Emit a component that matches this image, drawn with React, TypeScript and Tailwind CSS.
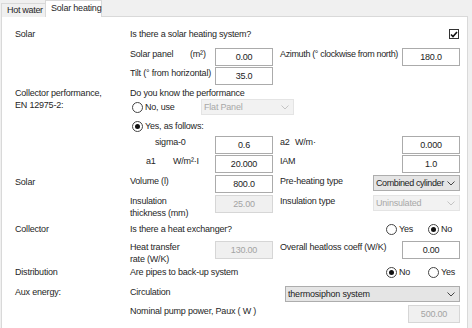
import React from "react";

function Chevron({ color = "#555" }: { color?: string }) {
  return (
    <svg width="8" height="5" viewBox="0 0 8 5" className="shrink-0">
      <path d="M0.5 0.5 L4 4 L7.5 0.5" fill="none" stroke={color} strokeWidth="1" />
    </svg>
  );
}

function Field({ value, w = "w-[58px]", disabled = false }: { value: string; w?: string; disabled?: boolean }) {
  return (
    <div
      className={`${w} h-[18px] shrink-0 border flex items-center justify-center ${
        disabled ? "border-[#d6d6d6] bg-[#f0f0f0] text-[#a3a3a3]" : "border-[#ababab] bg-white text-[#222]"
      }`}
    >
      {value}
    </div>
  );
}

function Select({ value, w, disabled = false, tight = false }: { value: string; w: string; disabled?: boolean; tight?: boolean }) {
  return (
    <div
      className={`${w} h-[16px] shrink-0 border flex items-center justify-between pl-[2px] pr-[4px] ${
        disabled ? "border-[#e4e4e4] bg-[#f2f2f2] text-[#a8a8a8]" : "border-[#adadad] bg-[#e5e5e5] text-[#222]"
      }`}
    >
      <span className={tight ? "tracking-[-0.4px]" : ""}>{value}</span>
      <Chevron color={disabled ? "#c4c4c4" : "#444"} />
    </div>
  );
}

function Radio({ checked = false, label }: { checked?: boolean; label: string }) {
  return (
    <div className="flex items-center gap-[2px]">
      <span className="w-[11px] h-[11px] shrink-0 rounded-full border border-[#444] bg-white flex items-center justify-center">
        {checked && <span className="w-[5px] h-[5px] rounded-full bg-[#111]" />}
      </span>
      <span>{label}</span>
    </div>
  );
}

function Checkbox() {
  return (
    <span className="w-[10px] h-[10px] border border-[#333] bg-white flex items-center justify-center">
      <svg width="8" height="7" viewBox="0 0 8 7">
        <path d="M1 3.5 L3 5.5 L7 1" fill="none" stroke="#111" strokeWidth="1.6" />
      </svg>
    </span>
  );
}

export default function App() {
  return (
    <div className="w-[472px] h-[328px] overflow-hidden whitespace-nowrap bg-[#f0f0f0] text-[9px] leading-[12px] tracking-[-0.2px] text-[#262626] [font-family:'Liberation_Sans',Arial,sans-serif]">
      {/* Tabs */}
      <div className="relative z-10 flex items-end h-[17px] pl-[1px]">
        <div className="w-[44px] h-[14px] border border-r-0 border-b-0 border-[#d9d9d9] bg-[#f0f0f0] pl-[5px] leading-[13px] tracking-[-0.3px]">
          Hot water
        </div>
        <div className="w-[57px] h-[17px] border border-b-0 border-[#d9d9d9] bg-white pl-[5px] leading-[15px]">
          Solar heating
        </div>
      </div>

      {/* Panel */}
      <div className="-mt-[1px] ml-[1px] w-[467px] h-[320px] border border-[#d9d9d9] bg-white pl-[13px] pr-[7px] pt-[10px]">
        {/* Solar */}
        <div className="flex items-center h-[14px]">
          <div className="w-[115px] shrink-0">Solar</div>
          <div className="flex-1 flex items-center justify-between">
            <span>Is there a solar heating system?</span>
            <span className="mr-[1px]"><Checkbox /></span>
          </div>
        </div>
        <div className="flex items-start mt-[7px] h-[18px]">
          <div className="w-[115px] shrink-0" />
          <div className="w-[85px] shrink-0 flex">
            <span className="w-[60px]">Solar panel</span>
            <span>(m²)</span>
          </div>
          <Field value="0.00" />
          <div className="flex-1 min-w-0 pl-[7px] tracking-[-0.35px]">Azimuth (° clockwise from north)</div>
          <Field value="180.0" />
        </div>
        <div className="flex items-start mt-[1px] h-[18px]">
          <div className="w-[115px] shrink-0" />
          <div className="w-[85px] shrink-0">Tilt (° from horizontal)</div>
          <Field value="35.0" />
        </div>

        {/* Collector performance */}
        <div className="flex items-start mt-[2px] h-[12px]">
          <div className="w-[115px] shrink-0">
            Collector performance,
            <br />
            EN 12975-2:
          </div>
          <div>Do you know the performance</div>
        </div>
        <div className="flex items-center h-[16px]">
          <div className="w-[115px] shrink-0" />
          <div className="w-[71px] shrink-0 pl-[2px]">
            <Radio label="No, use" />
          </div>
          <Select value="Flat Panel" w="w-[93px]" disabled />
        </div>
        <div className="flex items-center mt-[4px] h-[14px]">
          <div className="w-[115px] shrink-0" />
          <div className="pl-[2px]">
            <Radio checked label="Yes, as follows:" />
          </div>
        </div>
        <div className="flex items-start mt-[3px] h-[18px]">
          <div className="w-[115px] shrink-0" />
          <div className="w-[85px] shrink-0 pl-[25px]">sigma-0</div>
          <Field value="0.6" />
          <div className="flex-1 min-w-0 pl-[7px] flex">
            <span className="w-[15px]">a2</span>
            <span>W/m·</span>
          </div>
          <Field value="0.000" />
        </div>
        <div className="flex items-start mt-[1px] h-[18px]">
          <div className="w-[115px] shrink-0" />
          <div className="w-[85px] shrink-0 pl-[16px] flex">
            <span className="w-[27px]">a1</span>
            <span>W/m²·I</span>
          </div>
          <Field value="20.000" />
          <div className="flex-1 min-w-0 pl-[7px]">IAM</div>
          <Field value="1.0" />
        </div>

        {/* Solar storage */}
        <div className="flex items-start mt-[2px] h-[18px]">
          <div className="w-[115px] shrink-0 pt-[1px]">Solar</div>
          <div className="w-[85px] shrink-0">Volume (l)</div>
          <Field value="800.0" />
          <div className="flex-1 min-w-0 pl-[7px]">Pre-heating type</div>
          <Select value="Combined cylinder" w="w-[87px]" tight />
        </div>
        <div className="flex items-start mt-[2px] h-[24px]">
          <div className="w-[115px] shrink-0" />
          <div className="w-[85px] shrink-0">
            Insulation
            <br />
            thickness (mm)
          </div>
          <Field value="25.00" disabled />
          <div className="flex-1 min-w-0 pl-[7px]">Insulation type</div>
          <Select value="Uninsulated" w="w-[87px]" disabled />
        </div>

        {/* Collector */}
        <div className="flex items-center mt-[3px] h-[14px]">
          <div className="w-[115px] shrink-0">Collector</div>
          <div className="flex-1 min-w-0">Is there a heat exchanger?</div>
          <div className="w-[42px] shrink-0">
            <Radio label="Yes" />
          </div>
          <div className="w-[32px] shrink-0">
            <Radio checked label="No" />
          </div>
        </div>
        <div className="flex items-start mt-[5px] h-[18px]">
          <div className="w-[115px] shrink-0" />
          <div className="w-[85px] shrink-0">
            Heat transfer
            <br />
            rate (W/K)
          </div>
          <Field value="130.00" disabled />
          <div className="flex-1 min-w-0 pl-[7px]">Overall heatloss coeff (W/K)</div>
          <Field value="0.00" />
        </div>

        {/* Distribution */}
        <div className="flex items-center mt-[6px] h-[14px]">
          <div className="w-[115px] shrink-0">Distribution</div>
          <div className="flex-1 min-w-0">Are pipes to back-up system</div>
          <div className="w-[42px] shrink-0">
            <Radio checked label="No" />
          </div>
          <div className="w-[32px] shrink-0">
            <Radio label="Yes" />
          </div>
        </div>

        {/* Aux energy */}
        <div className="flex items-start mt-[7px] h-[16px]">
          <div className="w-[115px] shrink-0">Aux energy:</div>
          <div className="flex-1 min-w-0">Circulation</div>
          <Select value="thermosiphon system" w="w-[175px]" />
        </div>
        <div className="flex items-start mt-[3px] h-[18px]">
          <div className="w-[115px] shrink-0" />
          <div className="flex-1 min-w-0">Nominal pump power, Paux ( W )</div>
          <Field value="500.00" w="w-[52px]" disabled />
        </div>
      </div>
    </div>
  );
}
